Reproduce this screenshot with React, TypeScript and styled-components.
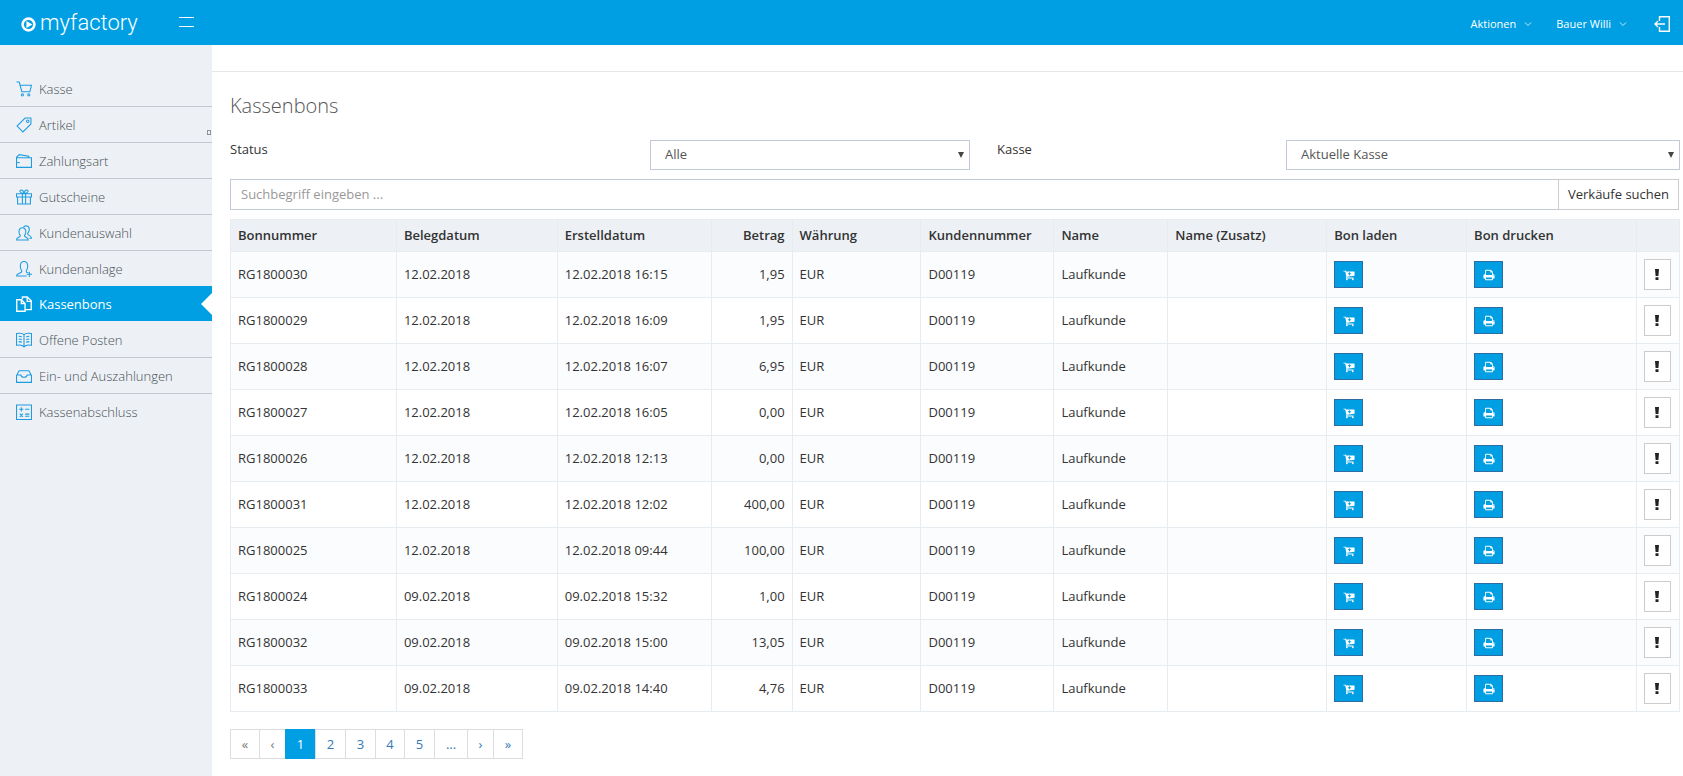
import React from "react";
import styled, { createGlobalStyle } from "styled-components";

const color = {
  brand: "#009fe3",
  side: "#edf1f5",
  text: "#333333",
  line: "#e7ecf1",
  field: "#c2cad8",
  button: "#cccccc",
  link: "#337ab7",
};

const Global = createGlobalStyle`
  *, *::before, *::after { box-sizing: border-box; }
  body {
    margin: 0;
    background: #ffffff;
    color: ${color.text};
    font: 400 13px/18px "Open Sans", "Noto Sans", sans-serif;
  }
  button, input, select { font: inherit; color: inherit; border-radius: 0; margin: 0; }
  a { text-decoration: none; color: inherit; }
`;

const Page = styled.div`
  display: flex;
  flex-direction: column;
  min-height: 100vh;
`;

const Header = styled.header`
  display: flex;
  align-items: center;
  height: 45px;
  padding: 0 13px 0 21px;
  background: ${color.brand};
  color: #ffffff;
`;

const Logo = styled.a`
  display: flex;
  align-items: center;
  gap: 4px;
  width: 158px;
  font: 300 22px/24px Roboto, "Liberation Sans", sans-serif;
  svg { margin-top: 3px; }
`;

const IconButton = styled.button`
  display: flex;
  padding: 0;
  border: 0;
  background: none;
  cursor: pointer;
`;

const MenuToggle = styled(IconButton)`
  padding-bottom: 2px;
`;

const Logout = styled(IconButton)`
  padding: 2px 0 0 3px;
`;

const HeaderNav = styled.nav`
  display: flex;
  align-items: center;
  gap: 24px;
  margin-left: auto;
`;

const MenuButton = styled.button`
  display: flex;
  align-items: center;
  gap: 8px;
  padding: 2px 0 0;
  border: 0;
  background: none;
  font-size: 11px;
  cursor: pointer;
`;

const Body = styled.div`
  display: flex;
  flex: 1;
`;

const Sidebar = styled.nav`
  flex: 0 0 212px;
  padding-top: 26px;
  background: ${color.side};
`;

const NavList = styled.ul`
  margin: 0;
  padding: 0;
  list-style: none;
`;

const NavItem = styled.li<{ $line: string }>`
  position: relative;
  border-bottom: ${(p) => (p.$line === "none" ? "0" : `1px solid ${p.$line}`)};
`;

const NavLink = styled.a<{ $active?: boolean }>`
  display: flex;
  align-items: center;
  gap: 7px;
  height: 35px;
  padding-left: 16px;
  background: ${(p) => (p.$active ? color.brand : "transparent")};
  color: ${(p) => (p.$active ? "#ffffff" : "#485056")};
  font-weight: ${(p) => (p.$active ? 400 : 300)};
  svg { color: ${(p) => (p.$active ? "#ffffff" : "#1f9ce0")}; }
`;

const ActiveArrow = styled.span`
  position: absolute;
  top: 7px;
  right: 0;
  border: 11px solid transparent;
  border-left-width: 0;
  border-right-color: #ffffff;
`;

const ResizeMark = styled.span`
  position: absolute;
  right: 1px;
  bottom: 7px;
  width: 4px;
  height: 5px;
  border: 1px solid #8d9297;
`;

const Main = styled.main`
  flex: 1;
  min-width: 0;
`;

const TopStrip = styled.div`
  height: 27px;
  border-bottom: 1px solid #e7e7e7;
`;

const Content = styled.div`
  padding: 20px 3px 16px 18px;
`;

const Title = styled.h1`
  margin: 0 0 20px;
  color: #555555;
  font-size: 20px;
  line-height: 28px;
  font-weight: 300;
`;

const Filters = styled.div`
  display: grid;
  grid-template-columns: 420fr 320fr 316fr 394fr;
  margin-bottom: 9px;
`;

const FilterLabel = styled.label<{ $second?: boolean }>`
  padding-left: ${(p) => (p.$second ? 27 : 0)}px;
`;

const SelectBox = styled.div`
  position: relative;
  svg { position: absolute; right: 6px; top: 12px; pointer-events: none; }
`;

const Select = styled.select`
  width: 100%;
  height: 30px;
  padding: 0 14px 2px;
  border: 1px solid ${color.field};
  background: #ffffff;
  color: #555555;
  appearance: none;
`;

const Search = styled.form`
  display: flex;
  margin: 0 1px 9px 0;
`;

const SearchInput = styled.input`
  flex: 1;
  min-width: 0;
  height: 31px;
  padding: 0 10px 2px;
  border: 1px solid ${color.field};
  border-right: 0;
  background: #ffffff;
  &::placeholder { color: #999999; opacity: 1; }
`;

const SearchButton = styled.button`
  width: 121px;
  height: 31px;
  padding: 0 0 2px;
  border: 1px solid ${color.button};
  background: #ffffff;
  white-space: nowrap;
`;

const Table = styled.table`
  width: 100%;
  table-layout: fixed;
  border-collapse: collapse;
`;

const Th = styled.th<{ $right?: boolean }>`
  height: 32px;
  padding: 0 7px 2px;
  border: 1px solid ${color.line};
  background: ${color.side};
  font-weight: 600;
  text-align: ${(p) => (p.$right ? "right" : "left")};
  white-space: nowrap;
`;

const Td = styled.td<{ $right?: boolean }>`
  height: 46px;
  padding: 0 7px 2px;
  border: 1px solid ${color.line};
  text-align: ${(p) => (p.$right ? "right" : "left")};
  white-space: nowrap;
`;

const ButtonTd = styled(Td)`
  padding-bottom: 0;
`;

const Row = styled.tr`
  &:nth-child(odd) { background: #fbfcfd; }
`;

const ActionButton = styled.button`
  display: flex;
  align-items: center;
  justify-content: center;
  width: 29px;
  height: 27px;
  padding: 1px 0 0;
  border: 1px solid #2e6da4;
  background: ${color.brand};
  color: #ffffff;
`;

const InfoButton = styled.button`
  display: flex;
  align-items: center;
  justify-content: center;
  width: 27px;
  height: 31px;
  padding: 0;
  border: 1px solid ${color.button};
  background: #ffffff;
`;

const Pager = styled.ul`
  display: flex;
  margin: 17px 0 0;
  padding: 0;
  list-style: none;
`;

const PageLink = styled.a<{ $kind?: "active" | "muted"; $width: number }>`
  display: block;
  width: ${(p) => p.$width}px;
  height: 30px;
  margin-right: -1px;
  padding-top: 5px;
  border: 1px solid ${(p) => (p.$kind === "active" ? color.brand : "#dddddd")};
  background: ${(p) => (p.$kind === "active" ? color.brand : "#ffffff")};
  color: ${(p) => (p.$kind === "active" ? "#ffffff" : p.$kind === "muted" ? "#777777" : color.link)};
  text-align: center;
`;

const icons: Record<string, React.ReactNode> = {
  cart: <><path d="M.5 1H3l2.500 9h7.500l1.500-6H4" /><circle cx="6" cy="13" r="1" /><circle cx="12" cy="13" r="1" /></>,
  tag: <><path d="M8.500 1H14v5.500L6.500 14 1 8.500z" /><circle cx="11" cy="4" r="1.200" /></>,
  wallet: <><path d="M1 4.500h13.500v9H.5V4L3 1.500 12 3v1.500" /><path d="M1 9h2.500" /></>,
  gift: <><path d="M.5 4.500h14v3H.5zM1.500 7.500v6.500h12V7.500M6 4.500V14M9 4.500V14M7 4C3 4 3 1 5 1s2.500 3 2.500 3S8 1 10 1s2 3-2 3" /></>,
  users: <><path d="M.5 14c0-3 3.500-2 3.500-4C2 7 2.500 2.500 6 2.500s4 4.500 2 7.500c0 2 3.500 1 3.500 4zM7 2C8.500 0 12.500.5 12.500 4c0 2-1.500 3-1.500 4.500 0 1.500 3.500 1 3.500 4H12.500" /></>,
  userPlus: <><path d="M10 14H.5c0-3 5-2 5-4.500C3 6.500 3.500.5 7.500.5s4.500 6 2 9c0 1 1 1.500 2 1.500M12.500 10v5M10 12.500h5" /></>,
  copy: <><path d="M.7 3.500h4.300L8.500 7v7.300H.7zM5 3.500V7h3.500M6 3V1h4.500l3.800 3.500v8.300H9M10.500 1v4h4" strokeWidth="1.300" /></>,
  book: <><path d="M7.500 2.500C6 1 3 1 .5 1.500v11c2.500-.5 5.500-.5 7 1.500 1.500-2 4.500-2 7-1.500v-11C12 1 9 1 7.500 2.500zV14M2.500 4l3 .5M2.500 6.500l3 .5M2.500 9l3 .5M12.500 4l-3 .5M12.500 6.500l-3 .5M12.500 9l-3 .5" /></>,
  inbox: <path d="M.5 7L3 2.500h9L14.500 7v6.500H.5zM.5 6.500h4c.5 3 5.500 3 6 0h4" />,
  calc: <path d="M.5 1h14v13.500H.5zM3 5h4M5 3v4M8.500 5h4M3.500 9l3 3M6.500 9l-3 3M8.500 9.500h4M8.500 11.500h4" />,
};

const LineIcon = ({ name }: { name: string }) => (
  <svg width="16" height="16" viewBox="0 0 15 15" fill="none" stroke="currentColor" aria-hidden="true">
    {icons[name]}
  </svg>
);

const Chevron = () => (
  <svg width="8" height="8" viewBox="0 0 8 8" fill="none" stroke="currentColor" opacity="0.8" aria-hidden="true">
    <path d="M1 2.500l3 3 3-3" />
  </svg>
);

const Triangle = () => (
  <svg width="6" height="6" viewBox="0 0 6 6" fill="#444444" aria-hidden="true">
    <path d="M0 0h6L3 6z" />
  </svg>
);

const CartPlus = () => (
  <svg width="12" height="12" viewBox="0 0 1792 1792" fill="currentColor" aria-hidden="true">
    <path d="M1216 704q0-26-19-45t-45-19h-128v-128q0-26-19-45t-45-19-45 19-19 45v128h-128q-26 0-45 19t-19 45 19 45 45 19h128v128q0 26 19 45t45 19 45-19 19-45v-128h128q26 0 45-19t19-45zm-512 832q0 53-37.500 90.500t-90.500 37.500-90.500-37.500-37.500-90.500 37.500-90.500 90.500-37.500 90.500 37.500 37.500 90.500zm896 0q0 53-37.500 90.500t-90.500 37.500-90.500-37.500-37.500-90.500 37.500-90.500 90.500-37.500 90.500 37.500 37.500 90.500zm128-1088v512q0 24-16 42.500t-41 21.500l-1044 122q1 7 4.500 21.500t6 26.500 2.500 22q0 16-24 64h920q26 0 45 19t19 45-19 45-45 19h-1024q-26 0-45-19t-19-45q0-14 11-39.500t29.500-59.500 20.500-38l-177-823h-204q-26 0-45-19t-19-45 19-45 45-19h256q16 0 28.500 6.500t20 15.500 13 24.500 7.500 26.500 5.500 29.500 4.500 25.500h1201q26 0 45 19t19 45z" />
  </svg>
);

const Printer = () => (
  <svg width="12" height="12" viewBox="-64 0 1792 1792" fill="currentColor" aria-hidden="true">
    <path d="M384 1536h896v-256h-896v256zM384 896h896v-384h-160q-40 0-68-28t-28-68v-160h-640v640zM1536 960q0-26-19-45t-45-19-45 19-19 45 19 45 45 19 45-19 19-45zM1664 960v416q0 13-9.500 22.500t-22.500 9.500h-224v160q0 40-28 68t-68 28h-960q-40 0-68-28t-28-68v-160h-224q-13 0-22.500-9.500t-9.500-22.500v-416q0-79 56.500-135.500t135.500-56.500h64v-544q0-40 28-68t68-28h672q40 0 88 20t76 48l152 152q28 28 48 76t20 88v256h64q79 0 135.500 56.500t56.500 135.500z" />
  </svg>
);

const Exclamation = () => (
  <svg width="4" height="11" viewBox="0 0 4 11" fill="#222222" aria-hidden="true">
    <path d="M0 0h4l-.6 7H.6zM.5 8.200h3V11h-3z" />
  </svg>
);

const nav = [
  { label: "Kasse", icon: "cart" },
  { label: "Artikel", icon: "tag" },
  { label: "Zahlungsart", icon: "wallet" },
  { label: "Gutscheine", icon: "gift" },
  { label: "Kundenauswahl", icon: "users" },
  { label: "Kundenanlage", icon: "userPlus", line: "none" },
  { label: "Kassenbons", icon: "copy", line: "transparent" },
  { label: "Offene Posten", icon: "book" },
  { label: "Ein- und Auszahlungen", icon: "inbox" },
  { label: "Kassenabschluss", icon: "calc", line: "none" },
];
const current = "Kassenbons";

const columns = [
  { title: "Bonnummer", width: 166 },
  { title: "Belegdatum", width: 161 },
  { title: "Erstelldatum", width: 154 },
  { title: "Betrag", width: 81, right: true },
  { title: "Währung", width: 129 },
  { title: "Kundennummer", width: 133 },
  { title: "Name", width: 114 },
  { title: "Name (Zusatz)", width: 159 },
  { title: "Bon laden", width: 140 },
  { title: "Bon drucken", width: 170 },
  { title: "", width: 43 },
];
const totalWidth = columns.reduce((sum, c) => sum + c.width, 0);

const receipts = [
  ["RG1800030", "12.02.2018", "16:15", "1,95"],
  ["RG1800029", "12.02.2018", "16:09", "1,95"],
  ["RG1800028", "12.02.2018", "16:07", "6,95"],
  ["RG1800027", "12.02.2018", "16:05", "0,00"],
  ["RG1800026", "12.02.2018", "12:13", "0,00"],
  ["RG1800031", "12.02.2018", "12:02", "400,00"],
  ["RG1800025", "12.02.2018", "09:44", "100,00"],
  ["RG1800024", "09.02.2018", "15:32", "1,00"],
  ["RG1800032", "09.02.2018", "15:00", "13,05"],
  ["RG1800033", "09.02.2018", "14:40", "4,76"],
];

const pages: { text: string; width: number; kind?: "active" | "muted" }[] = [
  { text: "«", width: 30, kind: "muted" },
  { text: "‹", width: 27, kind: "muted" },
  { text: "1", width: 31, kind: "active" },
  { text: "2", width: 31 },
  { text: "3", width: 31 },
  { text: "4", width: 30 },
  { text: "5", width: 31 },
  { text: "...", width: 34 },
  { text: "›", width: 27 },
  { text: "»", width: 30 },
];

export default function App() {
  return (
    <Page>
      <Global />
      <Header>
        <Logo href="#">
          <svg width="15" height="15" viewBox="0 0 15 15" aria-hidden="true">
            <circle cx="7.500" cy="7.500" r="5.900" fill="none" stroke="#ffffff" strokeWidth="2.600" />
            <path d="M5.400 4v7l6-3.500z" fill="#ffffff" />
          </svg>
          myfactory
        </Logo>
        <MenuToggle aria-label="Menü">
          <svg width="15" height="14" viewBox="0 0 15 14" stroke="currentColor" aria-hidden="true">
            <path d="M0 2.500h15M0 11.500h15" />
          </svg>
        </MenuToggle>
        <HeaderNav>
          <MenuButton>Aktionen<Chevron /></MenuButton>
          <MenuButton>Bauer Willi<Chevron /></MenuButton>
          <Logout aria-label="Abmelden">
            <svg width="16" height="16" viewBox="0 0 16 16" fill="none" stroke="currentColor" aria-hidden="true">
              <path d="M5.500 5V.7h9.800v14.600H5.500V11M1 8h10M4 5L1 8l3 3" strokeWidth="1.400" />
            </svg>
          </Logout>
        </HeaderNav>
      </Header>
      <Body>
        <Sidebar>
          <NavList>
            {nav.map((n) => (
              <NavItem key={n.label} $line={n.line ?? "#c3c9cf"}>
                <NavLink href="#" $active={n.label === current}>
                  <LineIcon name={n.icon} />
                  {n.label}
                </NavLink>
                {n.label === current && <ActiveArrow />}
                {n.label === "Artikel" && <ResizeMark />}
              </NavItem>
            ))}
          </NavList>
        </Sidebar>
        <Main>
          <TopStrip />
          <Content>
            <Title>Kassenbons</Title>
            <Filters>
              <FilterLabel htmlFor="status">Status</FilterLabel>
              <SelectBox>
                <Select id="status"><option>Alle</option></Select>
                <Triangle />
              </SelectBox>
              <FilterLabel htmlFor="kasse" $second>Kasse</FilterLabel>
              <SelectBox>
                <Select id="kasse"><option>Aktuelle Kasse</option></Select>
                <Triangle />
              </SelectBox>
            </Filters>
            <Search>
              <SearchInput aria-label="Suchbegriff" placeholder="Suchbegriff eingeben ..." />
              <SearchButton type="button">Verkäufe suchen</SearchButton>
            </Search>
            <Table>
              <colgroup>
                {columns.map((c, i) => (
                  <col key={i} style={{ width: `${(c.width / totalWidth) * 100}%` }} />
                ))}
              </colgroup>
              <thead>
                <tr>
                  {columns.map((c, i) => <Th key={i} $right={c.right}>{c.title}</Th>)}
                </tr>
              </thead>
              <tbody>
                {receipts.map(([id, date, time, amount]) => (
                  <Row key={id}>
                    <Td>{id}</Td>
                    <Td>{date}</Td>
                    <Td>{date} {time}</Td>
                    <Td $right>{amount}</Td>
                    <Td>EUR</Td>
                    <Td>D00119</Td>
                    <Td>Laufkunde</Td>
                    <Td />
                    <ButtonTd><ActionButton aria-label="Bon laden"><CartPlus /></ActionButton></ButtonTd>
                    <ButtonTd><ActionButton aria-label="Bon drucken"><Printer /></ActionButton></ButtonTd>
                    <ButtonTd><InfoButton aria-label="Details"><Exclamation /></InfoButton></ButtonTd>
                  </Row>
                ))}
              </tbody>
            </Table>
            <Pager>
              {pages.map((p) => (
                <li key={p.text}><PageLink href="#" $kind={p.kind} $width={p.width}>{p.text}</PageLink></li>
              ))}
            </Pager>
          </Content>
        </Main>
      </Body>
    </Page>
  );
}
